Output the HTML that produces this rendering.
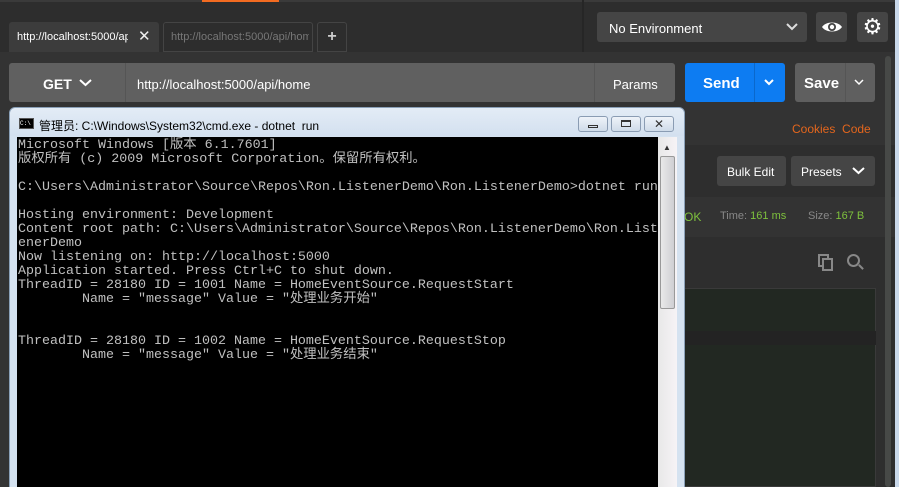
<!DOCTYPE html>
<html><head><meta charset="utf-8"><style>
*{margin:0;padding:0;box-sizing:border-box}
html,body{width:899px;height:487px;overflow:hidden}
body{background:#333;font-family:"Liberation Sans",sans-serif;position:relative}
.a{position:absolute}
.t{color:#fff;font-size:13px}
.con{position:absolute;left:18px;top:139px;font-family:"Liberation Mono","Noto Sans CJK SC",monospace;font-size:13.33px;line-height:14px;color:#c0c0c0;white-space:pre}
.chev{position:absolute}
</style></head><body>
<div class="a" style="left:0;top:0;width:899px;height:52px;background:#2d2d2d;border-top:2px solid #3a3a3a"></div>
<div class="a" style="left:202px;top:0;width:77px;height:2px;background:#f26b21"></div>
<div class="a" style="left:582px;top:0;width:2px;height:52px;background:#262626"></div>
<!-- tabs -->
<div class="a" style="left:9px;top:22px;width:150px;height:31px;background:#3c3c3c;border-radius:3px 3px 0 0"></div>
<div class="a t" style="left:17px;top:31px;font-size:11px;width:111px;overflow:hidden;white-space:nowrap">http://localhost:5000/api</div>
<div class="a" style="left:138px;top:27px;color:#eee;font-size:15px">✕</div>
<div class="a" style="left:163px;top:22px;width:150px;height:30px;border:1px solid #444;border-radius:3px 3px 0 0"></div>
<div class="a" style="left:171px;top:31px;font-size:11px;color:#777;width:138px;overflow:hidden;white-space:nowrap">http://localhost:5000/api/home</div>
<div class="a" style="left:317px;top:22px;width:30px;height:30px;border:1px solid #444;border-radius:3px 3px 0 0;color:#ccc;text-align:center;font-size:16px;line-height:28px;font-weight:bold">+</div>
<div class="a" style="left:0;top:52px;width:899px;height:435px;background:#333"></div>
<!-- env -->
<div class="a" style="left:597px;top:12px;width:210px;height:30px;background:#454545;border-radius:3px"></div>
<div class="a t" style="left:609px;top:21px">No Environment</div>
<svg class="chev" style="left:786px;top:23px" width="12" height="8"><path d="M1 1L6 6L11 1" stroke="#ddd" stroke-width="2" fill="none"/></svg>
<div class="a" style="left:816px;top:12px;width:31px;height:30px;background:#454545;border-radius:3px"></div>
<svg class="a" style="left:820px;top:18px" width="24" height="18" viewBox="0 0 24 18"><path d="M2 9C6 3 18 3 22 9C18 15 6 15 2 9Z" fill="#fff"/><circle cx="12" cy="9" r="4" fill="#454545"/><circle cx="12" cy="9" r="2.2" fill="#fff"/></svg>
<div class="a" style="left:857px;top:12px;width:31px;height:30px;background:#454545;border-radius:3px;color:#fff;font-size:22px;text-align:center;line-height:29px">⚙</div>
<!-- request bar -->
<div class="a" style="left:9px;top:63px;width:666px;height:39px;background:#606060;border-radius:3px"></div>
<div class="a" style="left:125px;top:63px;width:1px;height:39px;background:#555"></div>
<div class="a" style="left:594px;top:63px;width:1px;height:39px;background:#555"></div>
<div class="a t" style="left:43px;top:76px;font-weight:bold;font-size:14px">GET</div>
<svg class="chev" style="left:79px;top:79px" width="13" height="8"><path d="M1 1L6.5 6L12 1" stroke="#fff" stroke-width="2" fill="none"/></svg>
<div class="a t" style="left:137px;top:77px">http://localhost:5000/api/home</div>
<div class="a t" style="left:613px;top:77px">Params</div>
<div class="a" style="left:685px;top:63px;width:100px;height:39px;background:#0d7cf2;border-radius:3px"></div>
<div class="a" style="left:754px;top:63px;width:1px;height:39px;background:#0a68cc"></div>
<div class="a t" style="left:703px;top:75px;font-weight:bold;font-size:15px">Send</div>
<svg class="chev" style="left:764px;top:79px" width="10" height="7"><path d="M1 1L5 5L9 1" stroke="#fff" stroke-width="2" fill="none"/></svg>
<div class="a" style="left:795px;top:63px;width:80px;height:39px;background:#5f5f5f;border-radius:3px"></div>
<div class="a" style="left:845px;top:63px;width:1px;height:39px;background:#555"></div>
<div class="a t" style="left:804px;top:75px;font-weight:bold;font-size:15px">Save</div>
<svg class="chev" style="left:854px;top:79px" width="10" height="7"><path d="M1 1L5 5L9 1" stroke="#fff" stroke-width="1.5" fill="none"/></svg>
<div class="a" style="left:792px;top:122px;color:#e4661d;font-size:12px">Cookies&nbsp; Code</div>
<div class="a" style="left:680px;top:145px;width:235px;height:52px;background:#2e2e2e"></div>
<div class="a" style="left:717px;top:156px;width:69px;height:30px;background:#454545;border-radius:3px"></div>
<div class="a t" style="left:727px;top:165px;font-size:12px">Bulk Edit</div>
<div class="a" style="left:791px;top:156px;width:84px;height:30px;background:#454545;border-radius:3px"></div>
<div class="a t" style="left:801px;top:165px;font-size:12px">Presets</div>
<svg class="chev" style="left:852px;top:167px" width="13" height="8"><path d="M1 1L6.5 6L12 1" stroke="#fff" stroke-width="2" fill="none"/></svg>
<div class="a" style="left:684px;top:210px;color:#7ec13d;font-size:12px">OK</div>
<div class="a" style="left:720px;top:210px;color:#888;font-size:11px">Time: <span style="color:#7ec13d">161 ms</span></div>
<div class="a" style="left:808px;top:210px;color:#888;font-size:11px">Size: <span style="color:#7ec13d">167 B</span></div>
<div class="a" style="left:680px;top:237px;width:235px;height:250px;background:#2e2e2e"></div>
<div class="a" style="left:818px;top:254px;width:11px;height:13px;border:2px solid #888"></div>
<div class="a" style="left:822px;top:258px;width:11px;height:13px;border:2px solid #888;background:#2e2e2e"></div>
<div class="a" style="left:847px;top:254px;width:13px;height:13px;border:2px solid #888;border-radius:50%"></div>
<div class="a" style="left:858px;top:266px;width:6px;height:2px;background:#888;transform:rotate(45deg)"></div>
<div class="a" style="left:684px;top:288px;width:192px;height:199px;background:#222822;border:1px solid #3a3a3a"></div>
<div class="a" style="left:684px;top:331px;width:192px;height:14px;background:#232323"></div>
<div class="a" style="left:885px;top:56px;width:6px;height:431px;background:#474947;border-radius:3px"></div>
<div class="a" style="left:895px;top:0;width:4px;height:487px;background:#c9d8ea"></div>
<!-- cmd window -->
<div class="a" style="left:9px;top:107px;width:676px;height:390px;background:#d5e2f0;border:1px solid #8aa0b8;border-radius:6px 6px 0 0"></div>
<div class="a" style="left:10px;top:108px;width:674px;height:28px;background:linear-gradient(#e3ecf6,#d3e0ef);border-radius:6px 6px 0 0"></div>
<div class="a" style="left:19px;top:118px;width:15px;height:11px;background:#000;border:1px solid #555;color:#fff;font-size:6px;line-height:9px;font-family:'Liberation Mono',monospace">C:\</div>
<div class="a" style="left:39px;top:117px;font-size:12px;color:#000;font-family:'Liberation Sans','Noto Sans CJK SC',sans-serif">管理员: C:\Windows\System32\cmd.exe - dotnet &nbsp;run</div>
<div class="a" style="left:578px;top:116px;width:30px;height:16px;border:1px solid #8a9cb3;border-radius:3px;background:linear-gradient(#eef3f9,#cfdbe9)"><div style="margin:8px auto 0;width:10px;height:3px;border:1px solid #333"></div></div>
<div class="a" style="left:611px;top:116px;width:30px;height:16px;border:1px solid #8a9cb3;border-radius:3px;background:linear-gradient(#eef3f9,#cfdbe9)"><div style="margin:3px auto 0;width:10px;height:7px;border:1px solid #333;border-top-width:2px"></div></div>
<div class="a" style="left:644px;top:116px;width:30px;height:16px;border:1px solid #8a9cb3;border-radius:3px;background:linear-gradient(#eef3f9,#cfdbe9);text-align:center;font-size:12px;line-height:14px;color:#333">✕</div>
<div class="a" style="left:17px;top:137px;width:641px;height:350px;background:#000"></div>
<div class="a" style="left:658px;top:137px;width:19px;height:350px;background:linear-gradient(90deg,#e8e8e8,#f6f3f6)"></div>
<div class="a" style="left:663px;top:143px;color:#333;font-size:8px">▲</div>
<div class="a" style="left:660px;top:156px;width:15px;height:153px;background:linear-gradient(90deg,#e9e9e9,#cfcfd3);border:1px solid #999;border-radius:2px"></div>
<div class="con">Microsoft Windows [版本 6.1.7601]
版权所有 (c) 2009 Microsoft Corporation。保留所有权利。

C:\Users\Administrator\Source\Repos\Ron.ListenerDemo\Ron.ListenerDemo>dotnet run

Hosting environment: Development
Content root path: C:\Users\Administrator\Source\Repos\Ron.ListenerDemo\Ron.List
enerDemo
Now listening on: http://localhost:5000
Application started. Press Ctrl+C to shut down.
ThreadID = 28180 ID = 1001 Name = HomeEventSource.RequestStart
        Name = "message" Value = "处理业务开始"


ThreadID = 28180 ID = 1002 Name = HomeEventSource.RequestStop
        Name = "message" Value = "处理业务结束"</div>
</body></html>
